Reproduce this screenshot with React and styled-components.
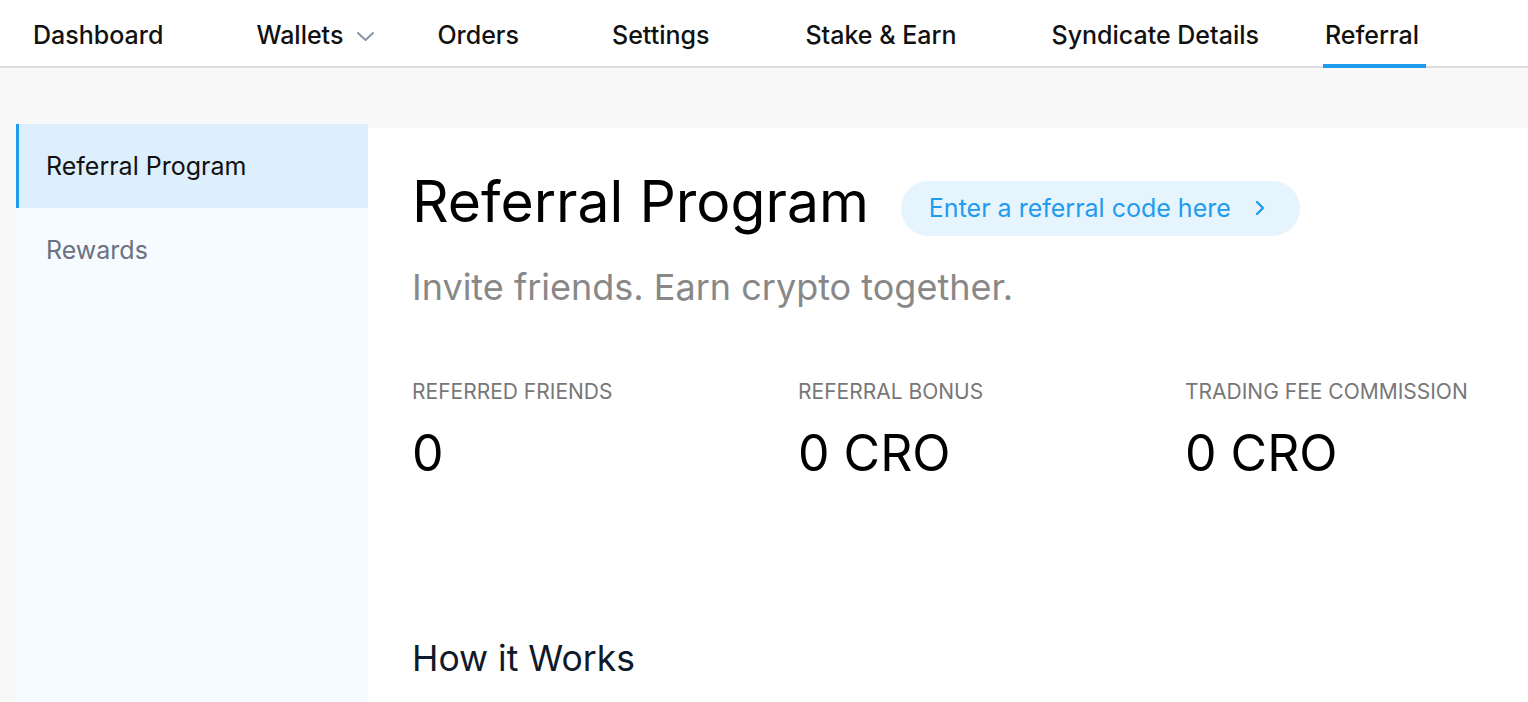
import React from 'react';
import styled, { createGlobalStyle } from 'styled-components';

const GlobalStyle = createGlobalStyle`
  html, body {
    margin: 0;
    padding: 0;
    background: #f8f8f8;
    font-family: Inter, "Noto Sans", sans-serif;
  }
`;

const Page = styled.div`
  width: 1528px;
  height: 702px;
  overflow: hidden;
  background: #f8f8f8;
  display: flex;
  flex-direction: column;
`;

const NavBar = styled.nav`
  height: 66px;
  flex-shrink: 0;
  background: #fff;
  border-bottom: 2px solid #dcdcdc;
  display: flex;
  align-items: stretch;
  padding-left: 33px;
`;

const NavItem = styled.div`
  position: relative;
  display: flex;
  align-items: center;
  padding-top: 4px;
  margin-left: ${p => p.$gap || 0}px;
  font-size: 25px;
  font-weight: 500;
  color: #111;
  white-space: nowrap;

  ${p => p.$active && `
    &:after {
      content: '';
      position: absolute;
      left: -2px;
      right: -7px;
      bottom: -2px;
      height: 4px;
      background: #1f9bf0;
    }
  `}
`;

const Chevron = styled.svg`
  margin-left: 14px;
  margin-top: 2px;
`;

const Body = styled.div`
  flex: 1;
  display: flex;
  padding: 56px 0 0 16px;
`;

const Sidebar = styled.aside`
  width: 352px;
  flex-shrink: 0;
  background: #f5fbff;
  display: flex;
  flex-direction: column;
`;

const SideItem = styled.div`
  height: 84px;
  display: flex;
  align-items: center;
  padding-left: ${p => (p.$active ? 27 : 30)}px;
  font-size: 25px;
  color: ${p => (p.$active ? '#111' : '#6c7280')};
  background: ${p => (p.$active ? '#ddeefd' : 'transparent')};
  border-left: ${p => (p.$active ? '3px solid #1f9bf0' : 'none')};
`;

const Main = styled.main`
  flex: 1;
  min-width: 0;
  margin-top: 4px;
  background: #fff;
  padding: 40px 0 0 44px;
`;

const Header = styled.div`
  display: flex;
  align-items: center;
  gap: 32px;
`;

const Title = styled.h1`
  margin: 0;
  font-size: 57px;
  font-weight: 400;
  color: #000;
  line-height: 1.2;
  white-space: nowrap;
`;

const CodeButton = styled.button`
  height: 55px;
  border: none;
  border-radius: 28px;
  background: #e6f4fe;
  color: #1f9bf0;
  font-family: inherit;
  font-size: 25px;
  padding: 0 35px 0 28px;
  display: flex;
  align-items: center;
  gap: 24px;
  margin-top: 12px;
  white-space: nowrap;
  cursor: pointer;
`;

const Subtitle = styled.p`
  margin: 30px 0 0;
  font-size: 36px;
  color: #888;
  line-height: 1.2;
`;

const Stats = styled.div`
  display: grid;
  grid-template-columns: 386px 387px auto;
  margin-top: 69px;
`;

const Stat = styled.div`
  display: flex;
  flex-direction: column;
`;

const StatLabel = styled.div`
  font-size: 21px;
  color: #777;
  text-transform: uppercase;
  line-height: 1.2;
  white-space: nowrap;
`;

const StatValue = styled.div`
  font-size: 50px;
  color: #000;
  line-height: 1.2;
  margin-top: 19px;
`;

const SectionTitle = styled.h2`
  margin: 155px 0 0;
  font-size: 35.5px;
  font-weight: 400;
  color: #0f1a2a;
  line-height: 1.2;
`;

const navItems = [
  { label: 'Dashboard', gap: 0 },
  { label: 'Wallets', gap: 93, dropdown: true },
  { label: 'Orders', gap: 63 },
  { label: 'Settings', gap: 93 },
  { label: 'Stake & Earn', gap: 96 },
  { label: 'Syndicate Details', gap: 95 },
  { label: 'Referral', gap: 66, active: true },
];

const stats = [
  { label: 'Referred Friends', value: '0' },
  { label: 'Referral Bonus', value: '0 CRO' },
  { label: 'Trading Fee Commission', value: '0 CRO' },
];

export default function App() {
  return (
    <Page>
      <GlobalStyle />
      <NavBar>
        {navItems.map(item => (
          <NavItem key={item.label} $gap={item.gap} $active={item.active}>
            {item.label}
            {item.dropdown && (
              <Chevron width="17" height="9" viewBox="0 0 17 9">
                <path d="M1 1l7.5 7 7.5-7" fill="none" stroke="#8a96a3" strokeWidth="2" strokeLinecap="round" strokeLinejoin="round" />
              </Chevron>
            )}
          </NavItem>
        ))}
      </NavBar>
      <Body>
        <Sidebar>
          <SideItem $active>Referral Program</SideItem>
          <SideItem>Rewards</SideItem>
        </Sidebar>
        <Main>
          <Header>
            <Title>Referral Program</Title>
            <CodeButton>
              Enter a referral code here
              <svg width="10" height="16" viewBox="0 0 10 16">
                <path d="M2 2l6 6-6 6" fill="none" stroke="#1f9bf0" strokeWidth="2.4" strokeLinecap="round" strokeLinejoin="round" />
              </svg>
            </CodeButton>
          </Header>
          <Subtitle>Invite friends. Earn crypto together.</Subtitle>
          <Stats>
            {stats.map(s => (
              <Stat key={s.label}>
                <StatLabel>{s.label}</StatLabel>
                <StatValue>{s.value}</StatValue>
              </Stat>
            ))}
          </Stats>
          <SectionTitle>How it Works</SectionTitle>
        </Main>
      </Body>
    </Page>
  );
}
